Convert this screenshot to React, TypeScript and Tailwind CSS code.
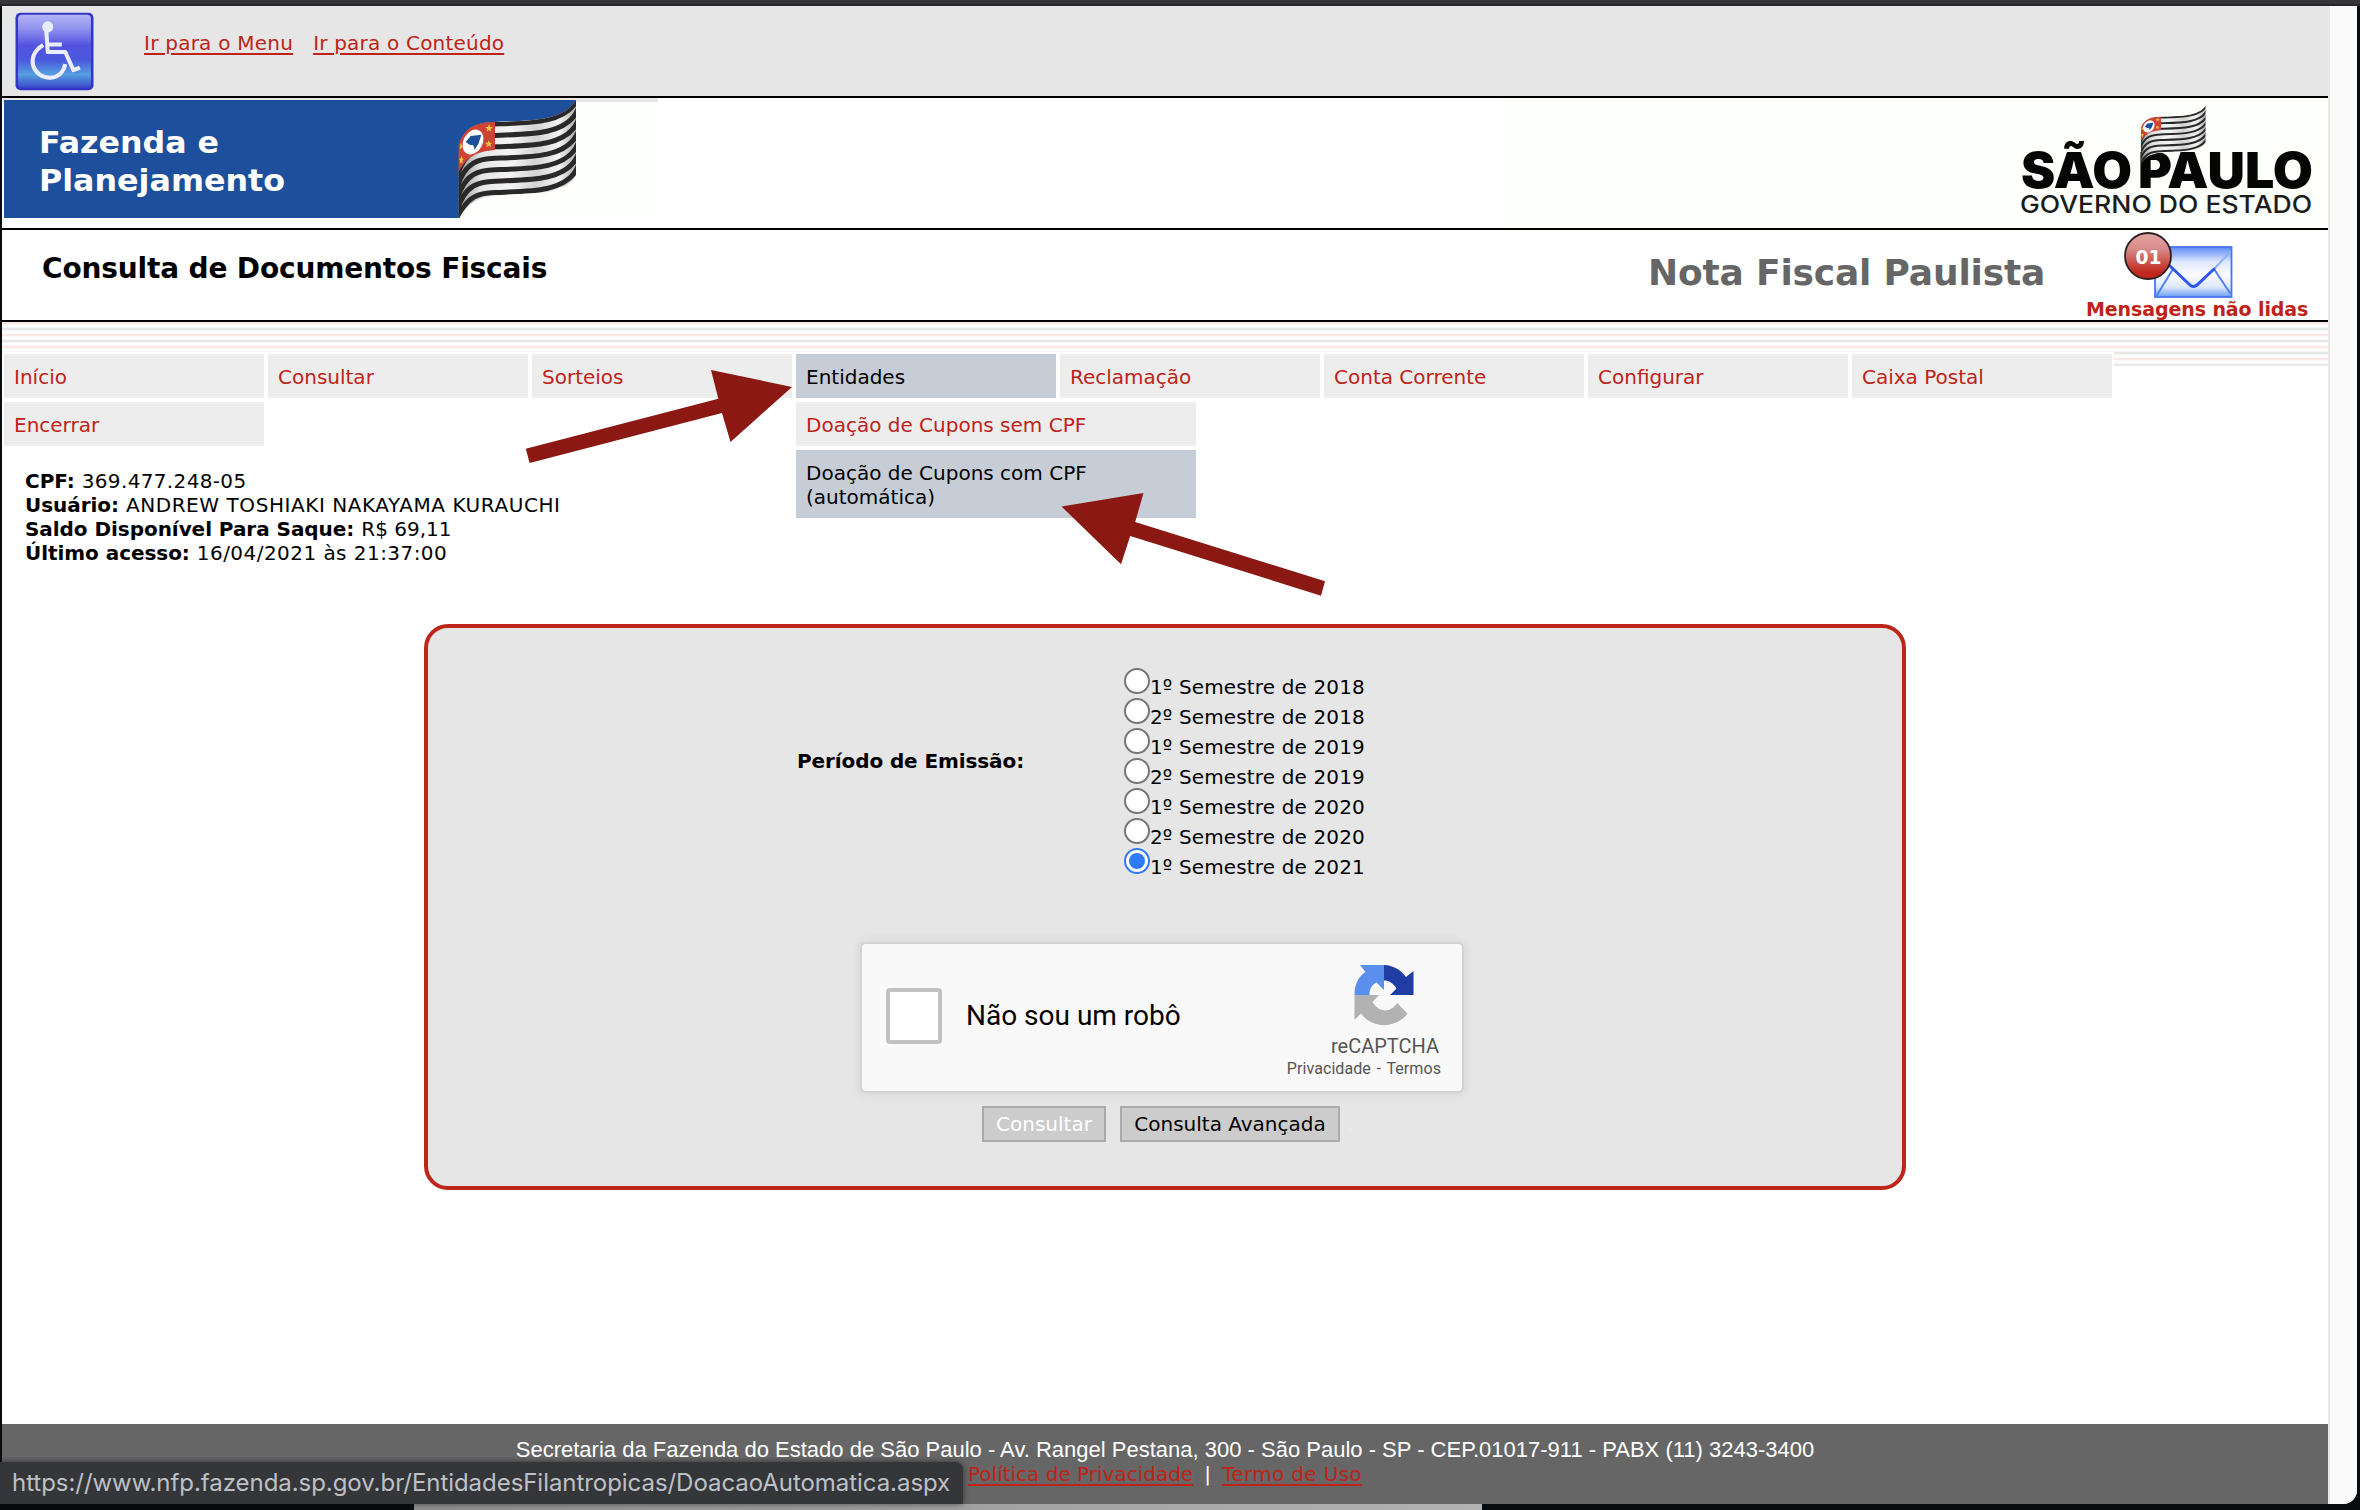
import type { ReactNode } from "react";

function T({ children, className = "" }: { children: ReactNode; className?: string }) {
  return <span className={"whitespace-nowrap " + className}>{children}</span>;
}

const EDGE = "C 75 105,120 97,165 96 C 280 92,370 92,408 30";

function Flag({ id, stripe = 15 }: { id: string; stripe?: number }) {
  const stripes = [0, 1, 2, 3, 4, 5, 6];
  return (
    <g>
      <defs>
        <clipPath id={id}>
          <path d={"M56 165 " + EDGE + " V256 C 370 317,290 308,240 312 C 130 318,90 325,58 384 H55 Z"} />
        </clipPath>
        <linearGradient id={id + "g"} x1="0" x2="1" y1="0" y2="0">
          <stop offset="0" stopColor="#8d8d8f" />
          <stop offset="0.2" stopColor="#e3e5e4" />
          <stop offset="0.45" stopColor="#f4f5f4" />
          <stop offset="0.65" stopColor="#d2d4d3" />
          <stop offset="0.85" stopColor="#f2f3f2" />
          <stop offset="1" stopColor="#a5a7a7" />
        </linearGradient>
      </defs>
      <g clipPath={"url(#" + id + ")"}>
        <rect x="50" y="20" width="362" height="370" fill={"url(#" + id + "g)"} />
        {stripes.map((k) => (
          <path
            key={k}
            d={"M52 182 " + EDGE + " l10 -20"}
            transform={"translate(0 " + (6 + k * 34.3) + ")"}
            fill="none"
            stroke="#2b2829"
            strokeWidth={stripe}
          />
        ))}
        <path d="M50 90 H165 V180 C120 184,80 195,55 248 H50 Z" fill="#cf4236" />
        <ellipse cx="99" cy="156" rx="29" ry="39" transform="rotate(28 99 156)" fill="#fff" />
        <path d="M77 156 L92 138 L124 134 L116 160 L104 179 L100 166 L90 165 Z" fill="#1e4f9c" />
        <g fill="#f2c744">
          <path d="M147 103 l3 8 8 0 -6 6 2 8 -7 -5 -7 5 2 -8 -6 -6 8 0z" />
          <path d="M146 150 l3 8 8 0 -6 6 2 8 -7 -5 -7 5 2 -8 -6 -6 8 0z" />
          <path d="M64 198 l3 8 4 0 -4 6 1 9 -5 -4 -4 4 1 -9 -3 -6 4 0z" />
          <path d="M62 158 l3 6 2 6 -4 6 -4 2z" />
        </g>
      </g>
    </g>
  );
}

function FazendaLogo() {
  return (
    <svg width="656" height="130" viewBox="2 98 656 130" className="block">
      <rect x="3" y="98" width="655" height="120" fill="#fdfffc" />
      <rect x="3" y="98" width="655" height="4" fill="#e6e8e6" />
      <path d="M4 100 H576 V105 C565 122 530 120 495 122 L470 160 H459 V218 H4 Z" fill="#1e4f9c" />
      <g transform="translate(440 90) scale(0.3333)">
        <Flag id="flagA" />
      </g>
      <g fill="#fff" fontFamily="DejaVu Sans" fontWeight="700" fontSize="31">
        <text x="39" y="153" textLength="180" lengthAdjust="spacingAndGlyphs">Fazenda e</text>
        <text x="39" y="191" textLength="246" lengthAdjust="spacingAndGlyphs">Planejamento</text>
      </g>
    </svg>
  );
}

function SaoPauloLogo() {
  return (
    <svg width="328" height="130" viewBox="2000 98 328 130" className="block">
      <g fontFamily="Inter" fill="#050505">
        <g fontWeight="900" fontSize="50">
          <text x="2021" y="188" textLength="111" lengthAdjust="spacingAndGlyphs">SÃO</text>
          <text x="2138" y="188" textLength="175" lengthAdjust="spacingAndGlyphs">PAULO</text>
        </g>
        <text x="2020" y="212.5" fontWeight="500" fontSize="24.5" fill="#1c1c1c" textLength="292" lengthAdjust="spacingAndGlyphs">
          GOVERNO DO ESTADO
        </text>
      </g>
      <g transform="translate(2130.6 101) scale(0.184 0.163)">
        <Flag id="flagB" stripe={12} />
      </g>
    </svg>
  );
}

function AccessIcon() {
  return (
    <svg width="79" height="79" viewBox="0.5 0.5 78.5 78" className="block">
      <defs>
        <linearGradient id="acc" x1="0" x2="0" y1="0" y2="1">
          <stop offset="0" stopColor="#b3b4f4" />
          <stop offset="0.2" stopColor="#8f90ee" />
          <stop offset="0.42" stopColor="#5352e0" />
          <stop offset="0.62" stopColor="#4a59dd" />
          <stop offset="0.82" stopColor="#569fe0" />
          <stop offset="1" stopColor="#3a48cc" />
        </linearGradient>
      </defs>
      <rect x="1" y="1" width="77.500" height="77" rx="5" fill="#3437c6" />
      <rect x="3.500" y="3" width="72.500" height="72.500" rx="4" fill="url(#acc)" />
      <g fill="none" stroke="#ecedfb" strokeWidth="4">
        <circle cx="33" cy="15" r="5.500" fill="#ecedfb" stroke="none" />
        <path d="M31.500 17 L33 40 H50.500 L58.500 58 L65 55.500" strokeLinejoin="round" />
        <path d="M33 32.500 H47" />
        <path d="M28.500 33 C10 44 18 66 36 65.500 C44 65 49 59 50.500 52" />
      </g>
    </svg>
  );
}

function MailIcon() {
  return (
    <svg width="114" height="72" viewBox="2122 230 114 72" className="block">
      <defs>
        <linearGradient id="env" x1="0" x2="0" y1="0" y2="1">
          <stop offset="0" stopColor="#5e8af8" />
          <stop offset="0.3" stopColor="#dfe9fd" />
          <stop offset="0.55" stopColor="#fdfaff" />
          <stop offset="0.8" stopColor="#dce9fb" />
          <stop offset="1" stopColor="#6c9df5" />
        </linearGradient>
        <linearGradient id="ball" x1="0" x2="0" y1="0" y2="1">
          <stop offset="0" stopColor="#e3a5a5" />
          <stop offset="0.35" stopColor="#d98a88" />
          <stop offset="0.85" stopColor="#c0281d" />
        </linearGradient>
      </defs>
      <rect x="2155" y="247" width="76.500" height="50" fill="url(#env)" stroke="#4a74f4" strokeWidth="1.800" />
      <g fill="none" strokeLinecap="round">
        <path d="M2157 295 L2173 269 M2230 293 L2214 269" stroke="#4f80f5" strokeWidth="2" />
        <path d="M2214 269 L2230 252" stroke="#8fb0f8" strokeWidth="2" />
        <path d="M2170 266 L2190 285 Q2193 288 2197 285 L2214 269" stroke="#2f55f0" strokeWidth="3" />
      </g>
      <circle cx="2148" cy="256" r="23" fill="url(#ball)" stroke="#2b2020" strokeWidth="1.800" />
      <text x="2135.500" y="264" fontFamily="DejaVu Sans" fontWeight="700" fontSize="19" fill="#fff" textLength="26" lengthAdjust="spacingAndGlyphs">
        01
      </text>
    </svg>
  );
}

function RecaptchaIcon() {
  return (
    <svg width="60" height="61" viewBox="0 0 60 61" className="block">
      <path d="M30 0 C39 0.500 46 4 52 12 L59.500 6 V30 H36 L42.500 23.500 C39 18 35 15.500 30 15.500 Z" fill="#1f3da4" />
      <path d="M6 0 H30 V25 L22.500 17.500 C17.500 20 15.500 24 15.500 30 H0.500 C0.500 20 4 12 11.500 7 Z" fill="#5a8fee" />
      <path d="M0.500 30 H25 L18.500 37 C25 48 37 48 43 38 L53.500 48.500 C42 64 18 64 7 48.500 L0.500 55 Z" fill="#b2b2b2" />
    </svg>
  );
}

const MENU = ["Início", "Consultar", "Sorteios", "Entidades", "Reclamação", "Conta Corrente", "Configurar", "Caixa Postal", "Encerrar"];

const PERIODS = [
  "1º Semestre de 2018",
  "2º Semestre de 2018",
  "1º Semestre de 2019",
  "2º Semestre de 2019",
  "1º Semestre de 2020",
  "2º Semestre de 2020",
  "1º Semestre de 2021",
];

const USER = [
  ["CPF:", "369.477.248-05", "tracking-[0.35px]"],
  ["Usuário:", "ANDREW TOSHIAKI NAKAYAMA KURAUCHI", "tracking-[0.56px]"],
  ["Saldo Disponível Para Saque:", "R$ 69,11", ""],
  ["Último acesso:", "16/04/2021 às 21:37:00", "tracking-[0.45px]"],
];

export default function App() {
  return (
    <div className="relative flex h-[1510px] w-[2360px] flex-col overflow-hidden bg-[#080c0e] font-['DejaVu_Sans',sans-serif] text-[20px] leading-[24px] text-black">
      <div className="h-[6px] shrink-0 border-b-2 border-[#2a2529] bg-[#353638]" />
      <div className="ml-[2px] mr-[3px] flex h-[1498px] shrink-0 overflow-hidden rounded-br-[14px] bg-white">
        <div className="flex w-[2326px] shrink-0 flex-col">
          <header className="flex h-[92px] shrink-0 border-b-2 border-black bg-[#e6e6e6] pl-[13px] pt-[6px] text-[#bf2318]">
            <AccessIcon />
            <nav className="ml-[50px] mt-[19px] flex h-[24px] gap-[20px] underline decoration-2 underline-offset-[3px]">
              <T className="tracking-[0.24px]">Ir para o Menu</T>
              <T className="tracking-[0.2px]">Ir para o Conteúdo</T>
            </nav>
          </header>
          <div className="flex h-[132px] shrink-0 justify-between border-b-2 border-black">
            <FazendaLogo />
            <div className="flex w-[828px] justify-end bg-[#fdfffb]">
              <SaoPauloLogo />
            </div>
          </div>
          <div className="flex h-[92px] shrink-0 border-b-2 border-black font-bold">
            <h1 className="ml-[40px] mt-[21px] text-[28px] leading-[36px] tracking-[-0.16px]">
              <T>Consulta de Documentos Fiscais</T>
            </h1>
            <div className="ml-auto mt-[23px] w-[400px] text-[36px] leading-[40px] tracking-[-0.18px] text-[#666]">
              <T>Nota Fiscal Paulista</T>
            </div>
            <div className="ml-[38px] w-[242px]">
              <div className="h-[68px] pl-[36px]">
                <MailIcon />
              </div>
              <div className="text-[19px] leading-[22px] tracking-[-0.1px] text-[#bf2318]">
                <T>Mensagens não lidas</T>
              </div>
            </div>
          </div>
          <div className="h-[44px] shrink-0 bg-[repeating-linear-gradient(to_bottom,#f8e8e6_0_2px,#fdf7f6_2px_3px,#fff_3px_5px,#f6f6f7_5px_6px,#e8e8e9_6px_8px,#f6f6f7_8px_9px,#fff_9px_11px,#fdf7f6_11px_12px)]" />
          <nav className="relative z-10 -mt-[14px] h-[94px] w-[2112px] shrink-0 bg-white pl-[2px] pt-[2px] text-[#bf2318]">
            <ul className="flex flex-wrap gap-x-[4px] gap-y-[4px]">
              {MENU.map((m) => (
                <li
                  key={m}
                  className={m === "Entidades" ? "relative h-[44px] w-[260px] bg-[#c7cdd6] text-black" : "h-[44px] w-[260px] bg-[#ededed]"}
                >
                  <div className="pl-[10px] pt-[11px]">
                    <T>{m}</T>
                  </div>
                  {m === "Entidades" && (
                    <ul className="absolute left-0 top-[48px] flex w-[400px] flex-col gap-[4px]">
                      <li className="h-[44px] bg-[#ededed] pl-[10px] pt-[11px] text-[#bf2318]">
                        <T>Doação de Cupons sem CPF</T>
                      </li>
                      <li className="h-[68px] bg-[#c7cdd6] pl-[10px] pt-[11px]">
                        <T>Doação de Cupons com CPF</T>
                        <br />
                        <T>(automática)</T>
                      </li>
                    </ul>
                  )}
                </li>
              ))}
            </ul>
          </nav>
          <section className="ml-[23px] mt-[23px] h-[96px] shrink-0">
            {USER.map(([k, v, track]) => (
              <div key={k} className="flex h-[24px] gap-[7px]">
                <b className="tracking-[-0.05px]">
                  <T>{k}</T>
                </b>
                <T className={track}>{v}</T>
              </div>
            ))}
          </section>
          <main className="ml-[422px] mt-[59px] flex h-[566px] w-[1482px] shrink-0 flex-col rounded-[24px] border-4 border-[#bf261b] bg-[#e6e6e6]">
            <div className="ml-[369px] mt-[40px] flex h-[210px]">
              <div className="mt-[81px] w-[327px] font-bold tracking-[-0.1px]">
                <T>Período de Emissão:</T>
              </div>
              <div>
                {PERIODS.map((p, i) => (
                  <label key={p} className="flex h-[30px]">
                    <span
                      className={
                        i === 6
                          ? "flex size-[26px] items-center justify-center rounded-full border-2 border-[#2f7bf6] bg-white"
                          : "size-[26px] rounded-full border-2 border-[#767676] bg-white"
                      }
                    >
                      {i === 6 && <span className="size-[16px] rounded-full bg-[#2f7bf6]" />}
                    </span>
                    <span className="pt-[7px] tracking-[0.14px]">
                      <T>{p}</T>
                    </span>
                  </label>
                ))}
              </div>
            </div>
            <div className="ml-[432px] mt-[64px] flex h-[151px] w-[604px] shrink-0 rounded-[6px] border-2 border-[#d3d3d3] bg-[#f9f9f9] font-['Roboto',sans-serif] shadow-[0_0_8px_2px_rgba(0,0,0,0.06)]">
              <div className="ml-[24px] mt-[44px] size-[56px] rounded-[4px] border-4 border-[#c1c1c1] bg-white" />
              <div className="ml-[24px] mt-[54px] text-[28px] leading-[36px]">
                <T>Não sou um robô</T>
              </div>
              <div className="ml-auto mr-[21px] mt-[21px] flex flex-col items-end text-[#555]">
                <div className="mr-[27px]">
                  <RecaptchaIcon />
                </div>
                <div className="mr-[2px] mt-[8px] text-[20px] leading-[24px]">
                  <T>reCAPTCHA</T>
                </div>
                <div className="mt-px flex gap-[5.5px] text-[16px] leading-[20px] tracking-[0.08px]">
                  <T>Privacidade</T>
                  <T>-</T>
                  <T>Termos</T>
                </div>
              </div>
            </div>
            <div className="ml-[554px] mt-[13px] flex h-[36px]">
              <button className="flex w-[124px] items-center justify-center border-2 border-[#aaa] bg-[#ccc] text-white">
                <T>Consultar</T>
              </button>
              <button className="ml-[14px] flex w-[220px] items-center justify-center border-2 border-[#aaa] bg-[#ccc]">
                <T>Consulta Avançada</T>
              </button>
              <span className="ml-[9px] mt-[14px] text-[10px] leading-[14px] text-[#f4f4f4]">.</span>
            </div>
          </main>
          <footer className="mt-auto h-[80px] shrink-0 bg-[#666] pt-[14px] text-center text-white">
            <div className="h-[24px] font-['Liberation_Sans',sans-serif] text-[22px]">
              <T>Secretaria da Fazenda do Estado de São Paulo - Av. Rangel Pestana, 300 - São Paulo - SP - CEP.01017-911 - PABX (11) 3243-3400</T>
            </div>
            <div className="flex h-[24px] justify-center">
              <T className="text-[#bf2318] underline decoration-2 underline-offset-[3px]">Política de Privacidade</T>
              <span className="w-[29px]">|</span>
              <T className="tracking-[0.34px] text-[#bf2318] underline decoration-2 underline-offset-[3px]">Termo de Uso</T>
            </div>
          </footer>
        </div>
        <div className="flex-1 border-l-2 border-[#e8e8e8] bg-[#fafafa]" />
      </div>
      <div className="ml-[414px] h-[6px] w-[1068px] shrink-0 bg-linear-to-r from-[#8f8f8f] to-[#b2b2b2]" />
      <div className="absolute left-0 top-[1462px] z-20 h-[42px] w-[963px] rounded-tr-[8px] bg-[#35363a] pl-[12px] pt-[7px] font-['Inter',sans-serif] text-[24px] leading-[28px] tracking-[-0.05px] text-[#bdc1c6] shadow-[0_0_6px_rgba(0,0,0,0.5)]">
        <T>https://www.nfp.fazenda.sp.gov.br/EntidadesFilantropicas/DoacaoAutomatica.aspx</T>
      </div>
      <svg className="absolute left-[500px] top-[340px] z-20" width="850" height="270" viewBox="500 340 850 270" fill="#8b1812">
        <path d="M792 387 L711 370 L718.300 398.700 L525.800 448.700 L529.600 463 L722 413 L730.500 442 Z" />
        <path d="M1061.500 506.500 L1143.500 493 L1135.200 522 L1325 581.300 L1321 595.700 L1130.200 536 L1121 564.300 Z" />
      </svg>
    </div>
  );
}
